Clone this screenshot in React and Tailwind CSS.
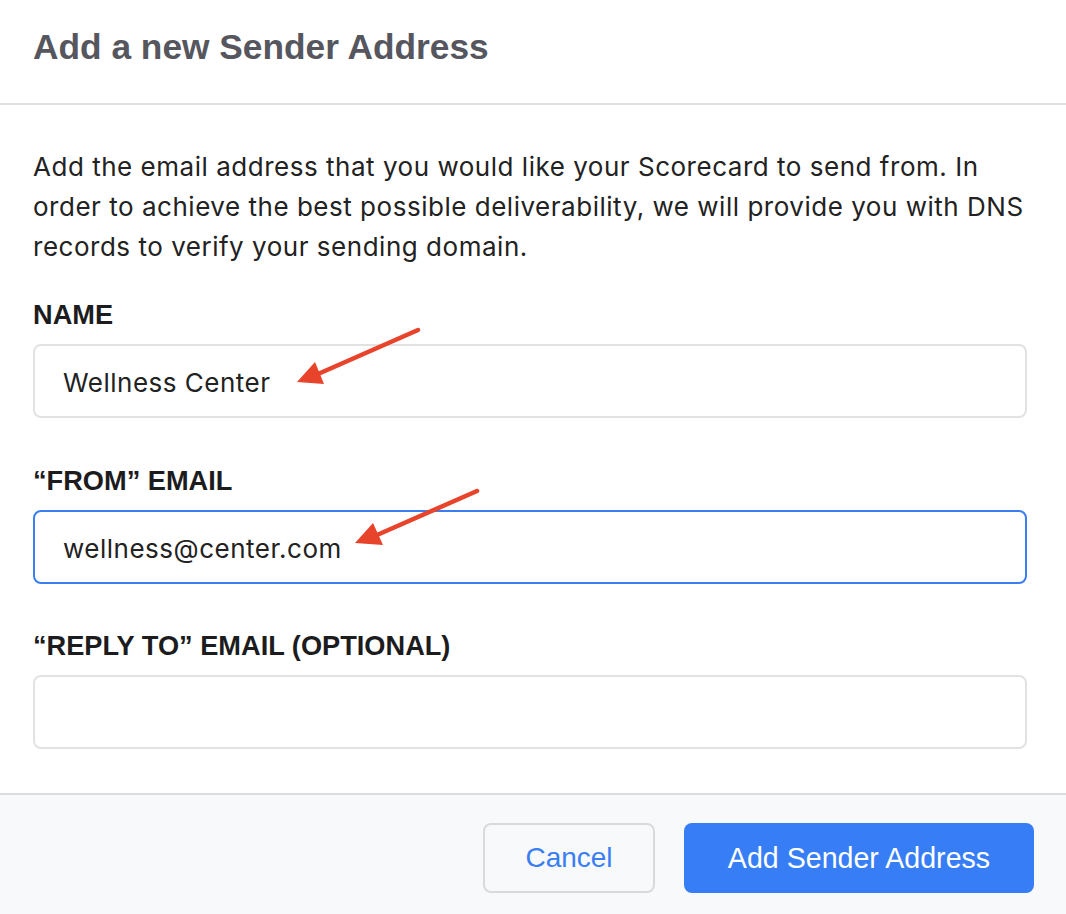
import React from "react";

function Field({ label, value, focused, className = "" }) {
  return (
    <div className={className}>
      <div className="text-[27.2px] leading-[32px] font-bold text-[#1c1c1e] font-['Liberation_Sans',Arial,sans-serif]">
        {label}
      </div>
      <div
        className={
          "mt-[13px] h-[74px] rounded-[8px] border-2 flex items-center pl-[28px] pt-[2px] bg-white " +
          (focused ? "border-[#3a7ef2]" : "border-[#e2e2e2]")
        }
      >
        <span className="text-[26px] tracking-[0.5px] text-[#222] font-['Inter',sans-serif]">{value}</span>
      </div>
    </div>
  );
}

export default function App() {
  return (
    <div className="relative w-[1066px] h-[914px] bg-white overflow-hidden flex flex-col">
      <div className="h-[105px] shrink-0 border-b-2 border-[#e0e0e0] px-[33px] pt-[27px]">
        <h1 className="text-[35.3px] leading-[40px] font-bold text-[#56565e] font-['Liberation_Sans',Arial,sans-serif]">
          Add a new Sender Address
        </h1>
      </div>
      <div className="flex-1 pl-[33px] pr-[39px] pt-[42px]">
        <p className="text-[26px] leading-[40px] tracking-[0.52px] text-[#222] font-['Inter',sans-serif] whitespace-nowrap">
          Add the email address that you would like your Scorecard to send from. In
          <br />
          order to achieve the best possible deliverability, we will provide you with DNS
          <br />
          records to verify your sending domain.
        </p>
        <Field className="mt-[32px]" label="NAME" value="Wellness Center" />
        <Field className="mt-[47px]" label="“FROM” EMAIL" value="wellness@center.com" focused />
        <Field className="mt-[46px]" label="“REPLY TO” EMAIL (OPTIONAL)" value="" />
      </div>
      <div className="h-[121px] shrink-0 border-t-2 border-[#dcdcdc] bg-[#f8f9fa] flex justify-end items-start pt-[28px] pr-[32px] gap-[29px] font-['Liberation_Sans',Arial,sans-serif]">
        <button className="w-[172px] h-[70px] rounded-[8px] border-2 border-[#dadada] bg-[#f8f9fa] text-[28px] text-[#3a7ef2]">
          Cancel
        </button>
        <button className="w-[350px] h-[70px] rounded-[8px] bg-[#377ef6] text-[28.6px] text-white">
          Add Sender Address
        </button>
      </div>
      <svg className="absolute inset-0 pointer-events-none" width="1066" height="914" viewBox="0 0 1066 914">
        <line x1="418" y1="330" x2="318" y2="374" stroke="#e8432b" strokeWidth="4.5" strokeLinecap="round" />
        <polygon points="297,382 315,362 324,384" fill="#e8432b" />
        <line x1="477" y1="491" x2="377" y2="535" stroke="#e8432b" strokeWidth="4.5" strokeLinecap="round" />
        <polygon points="355,543 373,523 383,545" fill="#e8432b" />
      </svg>
    </div>
  );
}
